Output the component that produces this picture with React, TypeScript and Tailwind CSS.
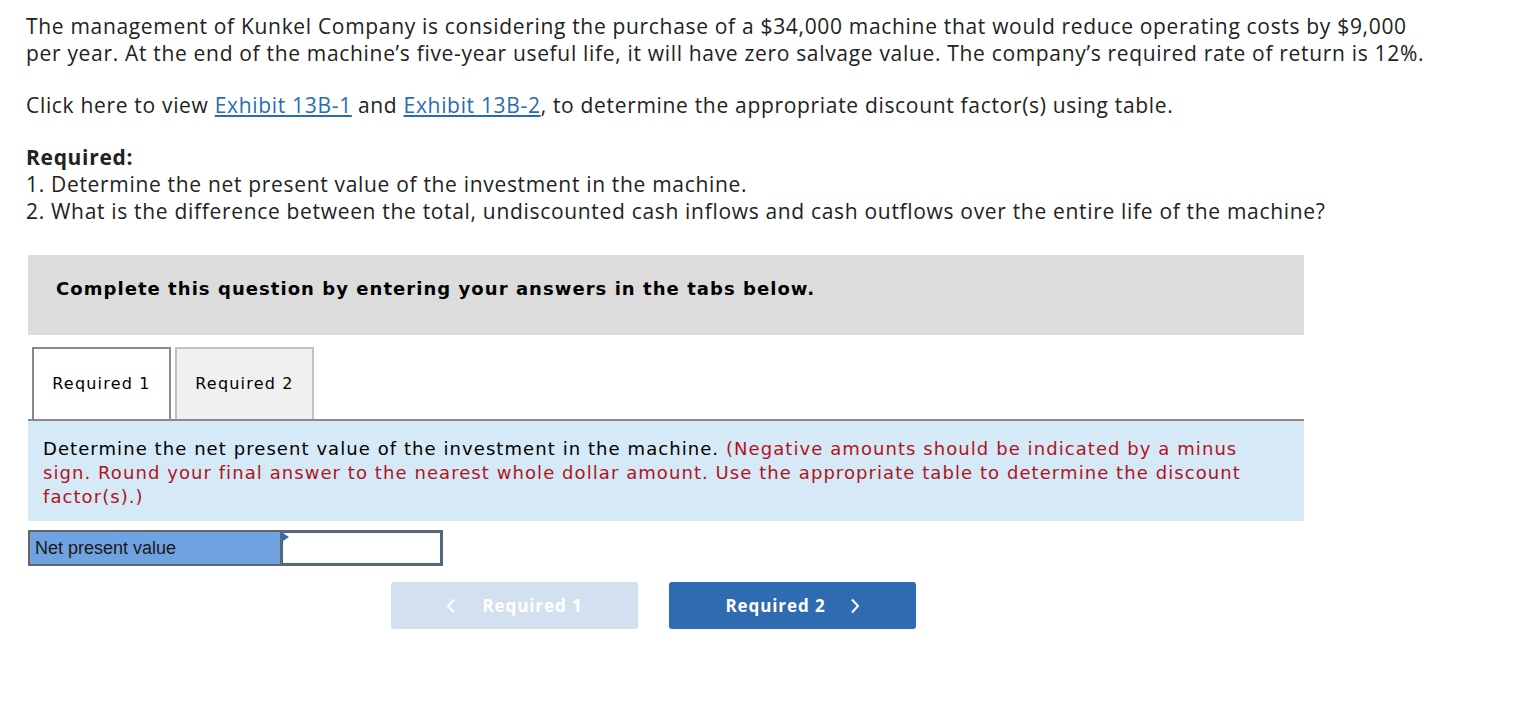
import React from "react";

const Chevron = ({ dir }: { dir: "left" | "right" }) => (
  <svg width="10" height="16" viewBox="0 0 10 16" fill="none">
    {dir === "left" ? (
      <path d="M8 1.5L2 8l6 6.5" stroke="currentColor" strokeWidth="2" />
    ) : (
      <path d="M2 1.5L8 8l-6 6.5" stroke="currentColor" strokeWidth="2" />
    )}
  </svg>
);

export default function App() {
  return (
    <div className="min-h-[722px] w-[1532px] bg-white">
      <div className="pl-[26px] pt-[13px] font-['Open_Sans',sans-serif] text-[21px] leading-[27px] tracking-[0.68px] text-[#222]">
        <p>
          The management of Kunkel Company is considering the purchase of a $34,000 machine that would reduce operating costs by $9,000
          <br />
          per year. At the end of the machine’s five-year useful life, it will have zero salvage value. The company’s required rate of return is 12%.
        </p>
        <p className="mt-[25px]">
          Click here to view{" "}
          <span className="text-[#2b6cb0] underline underline-offset-2">Exhibit 13B-1</span> and{" "}
          <span className="text-[#2b6cb0] underline underline-offset-2">Exhibit 13B-2</span>, to determine the appropriate discount factor(s) using table.
        </p>
        <p className="mt-[25px] font-bold">Required:</p>
        <p>1. Determine the net present value of the investment in the machine.</p>
        <p>2. What is the difference between the total, undiscounted cash inflows and cash outflows over the entire life of the machine?</p>
      </div>

      <div className="ml-[28px] mt-[30px] w-[1276px] font-['DejaVu_Sans',Verdana,sans-serif]">
        <div className="h-[80px] bg-[#dcdcdc] pl-[28px] pt-[22px] text-[18px] font-bold leading-[24px] tracking-[1.05px] text-black">
          Complete this question by entering your answers in the tabs below.
        </div>

        <div className="mt-[12px] flex gap-[4px] pl-[4px]">
          <div className="flex h-[72px] w-[139px] items-center justify-center border-2 border-b-0 border-[#8a8a8a] bg-white text-[16px] tracking-[1.2px] text-black">
            Required 1
          </div>
          <div className="flex h-[72px] w-[139px] items-center justify-center border-2 border-b-0 border-[#c2c2c2] bg-[#f0f0f0] text-[16px] tracking-[1.2px] text-black">
            Required 2
          </div>
        </div>
        <div className="h-[2px] bg-[#8a8a8a]" />

        <div className="bg-[#d5e9f7] pb-[12px] pl-[15px] pr-[40px] pt-[16px] text-[18px] leading-[24px] tracking-[1.07px] text-black">
          Determine the net present value of the investment in the machine.{" "}
          <span className="text-[#b0141c]">
            (Negative amounts should be indicated by a minus sign. Round your final answer to the nearest whole dollar amount. Use the appropriate table to determine the discount factor(s).)
          </span>
        </div>

        <div className="mt-[9px] flex">
          <div className="flex h-[36px] w-[254px] items-center border-2 border-[#666] bg-[#6ea2e0] pl-[5px] font-['Liberation_Sans',Arial,sans-serif] text-[18px] text-[#1a1a1a]">
            Net present value
          </div>
          <div className="relative h-[36px] w-[161px] border-2 border-l-0 border-[#666]">
            <div className="h-full w-full border border-[#2f6bb0] bg-white" />
            <div className="absolute left-[1px] top-[1px] h-0 w-0 border-y-[4px] border-l-[6px] border-y-transparent border-l-[#2f6bb0]" />
          </div>
        </div>
      </div>

      <div className="ml-[391px] mt-[16px] flex gap-[31px] font-['Open_Sans',sans-serif] text-[17px] font-bold tracking-[0.9px] text-white">
        <div className="flex h-[47px] w-[247px] items-center justify-center gap-[26px] rounded-[3px] bg-[#d3e0ef]">
          <Chevron dir="left" />
          <span>Required 1</span>
        </div>
        <div className="flex h-[47px] w-[247px] items-center justify-center gap-[24px] rounded-[3px] bg-[#2f6bb1]">
          <span>Required 2</span>
          <Chevron dir="right" />
        </div>
      </div>
    </div>
  );
}
